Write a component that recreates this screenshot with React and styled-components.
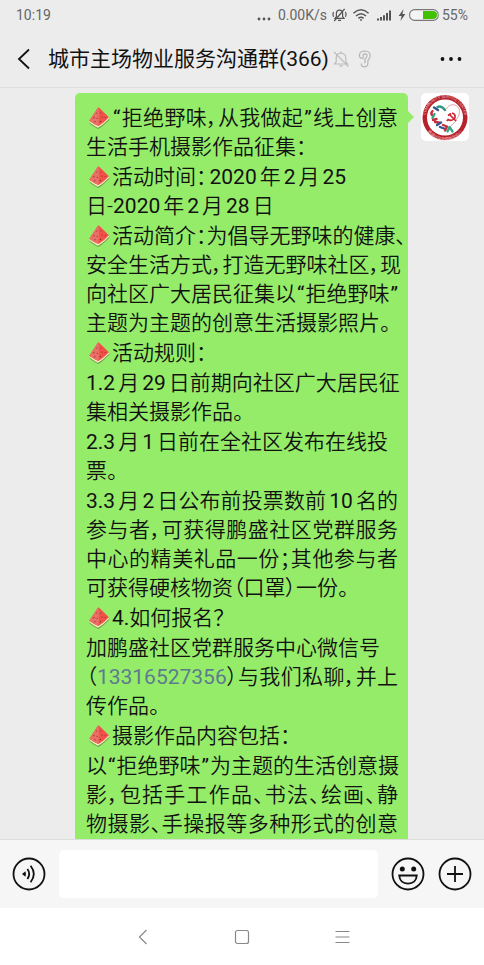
import React, { useState } from "react";
import styled, { createGlobalStyle } from "styled-components";

// every paragraph is a list of lines, "~" stands for the watermelon emoji
const message = [
  ["~“拒绝野味，从我做起”线上创意", "生活手机摄影作品征集："],
  ["~活动时间：2020年2月25", "日-2020年2月28日"],
  [
    "~活动简介：为倡导无野味的健康、",
    "安全生活方式，打造无野味社区，现",
    "向社区广大居民征集以“拒绝野味”",
    "主题为主题的创意生活摄影照片。",
  ],
  ["~活动规则："],
  ["1.2月29日前期向社区广大居民征", "集相关摄影作品。"],
  ["2.3月1日前在全社区发布在线投", "票。"],
  [
    "3.3月2日公布前投票数前10名的",
    "参与者，可获得鹏盛社区党群服务",
    "中心的精美礼品一份；其他参与者",
    "可获得硬核物资（口罩）一份。",
  ],
  ["~4.如何报名？"],
  [
    "加鹏盛社区党群服务中心微信号",
    "（13316527356）与我们私聊，并上",
    "传作品。",
  ],
  ["~摄影作品内容包括："],
  [
    "以“拒绝野味”为主题的生活创意摄",
    "影，包括手工作品、书法、绘画、静",
    "物摄影、手操报等多种形式的创意",
  ],
];

const fullLines = /(创意|健康、|，现|味”|民征|名的|服务|与者|并上|意摄|、静)$/;

const Melon = () => (
  <MelonIcon viewBox="0 0 24 24" role="img" aria-label="西瓜">
    <path d="M0.800 16.500 Q1.500 18.500 11 24 Q13 24 23.400 14 V12 L11 20Z" fill="#6f9f4c" />
    <path d="M0.800 15.500 Q1.500 17.500 10.500 22.600 Q12.500 23 23.400 12.600 L21 10.500 L11 18Z" fill="#f4efba" />
    <path d="M10.800 0.800 Q11.600 0.200 12.500 1 L22.800 11.200 Q18 17 11.400 20.600 Q6 18.500 1.400 15Z" fill="#f4504a" />
    <path d="M10.800 0.800 L1.400 15 Q5.500 18.500 11.400 20.600 Q12.500 10 11.600 0.600Z" fill="#ea6f66" />
    <g fill="#8a2a2a">
      <circle cx="9.600" cy="6.500" r="0.600" />
      <circle cx="14" cy="6.600" r="0.600" />
      <circle cx="6.400" cy="11.600" r="0.700" />
      <circle cx="10" cy="12.400" r="0.600" />
      <circle cx="15.400" cy="11" r="0.700" />
      <circle cx="7.600" cy="16" r="0.600" />
      <circle cx="13.600" cy="15.800" r="0.700" />
      <circle cx="18.800" cy="11.600" r="0.600" />
    </g>
  </MelonIcon>
);

const renderLine = (line) =>
  line.split(/(~|“|”|\d{11}|\d[\d.]*)/).map((part, i) => {
    if (part === "~") return <Melon key={i} />;
    if (/^\d{11}$/.test(part))
      return (
        <Phone key={i} href={`tel:${part}`}>
          {part}
        </Phone>
      );
    if (part === "“" || part === "”") return <Quote key={i}>{part}</Quote>;
    // list numbers such as "4." stay tight to the text
    if (/^\d/.test(part))
      return (
        <Num key={i} $tight={part.endsWith(".")}>
          {part}
        </Num>
      );
    return part;
  });

const StatusIcons = () => (
  <StatusRight>
    <svg width="14" height="14" viewBox="0 0 14 14" fill="#555">
      <circle cx="2" cy="11" r="1.400" />
      <circle cx="7" cy="11" r="1.400" />
      <circle cx="12" cy="11" r="1.400" />
    </svg>
    <Speed>0.00K/s</Speed>
    <svg width="15" height="14" viewBox="0 0 15 14" fill="none" stroke="#555" strokeWidth="1.200">
      <path d="M3 10.300 L4.400 8.600 V5.200 Q4.600 2.200 7.500 2.200 Q10.400 2.200 10.600 5.200 V8.600 L12 10.300Z" />
      <path d="M6 12.400 H9 M12.600 1 L2.200 13" />
      <path d="M1.600 4 Q0.400 6.400 1.600 8.800 M13.400 4 Q14.600 6.400 13.400 8.800" />
    </svg>
    <svg width="18" height="14" viewBox="0 0 18 14" fill="none" stroke="#555" strokeWidth="1.500">
      <path d="M1.400 5.200 Q9 -1.600 16.600 5.200" />
      <path d="M4 8 Q9 3.400 14 8" />
      <path d="M6.400 10.400 Q9 8 11.600 10.400" />
      <circle cx="9" cy="12" r="0.900" fill="#555" stroke="none" />
    </svg>
    <svg width="18" height="14" viewBox="0 0 18 14" fill="#555">
      <path d="M2 10.600h2v2H2z M5 9h2v3.600H5z M8 7.200h2v5.400H8z M11 5h2v7.600h-2z M14 2.600h2v10h-2z" />
    </svg>
    <Battery>
      <svg width="8" height="14" viewBox="0 0 8 14" fill="#555">
        <path d="M5.600 1 L0.600 8 H3.600 L2.400 13 L7.400 6 H4.400Z" />
      </svg>
      <svg width="30" height="12" viewBox="0 0 30 12">
        <rect x="0.600" y="0.600" width="28.600" height="10.800" rx="5" fill="#f4f4f4" stroke="#777" strokeWidth="1.100" />
        <path d="M14 2 H24 Q28 2 28 6 Q28 10 24 10 H14Z" fill="#43c100" />
      </svg>
      <span>55%</span>
    </Battery>
  </StatusRight>
);

const GroupAvatar = () => (
  <svg width="48" height="48" viewBox="0 0 48 48" role="img" aria-label="community service center">
    <defs>
      <path id="ringTop" d="M4.500 24.500 A19.500 19.500 0 1 1 43.500 24.500" />
      <path id="ringBottom" d="M2.500 26 A21.500 21.500 0 0 0 45.500 26" />
    </defs>
    <circle cx="24" cy="24.500" r="22.500" fill="#b5222c" />
    <circle cx="24" cy="24.500" r="18" fill="#fff" />
    <g fill="#f0b8ba" fontFamily="Roboto, sans-serif" fontSize="4">
      <text>
        <textPath href="#ringTop" startOffset="50%" textAnchor="middle">
          COMMUNITY SERVICE CENTER
        </textPath>
      </text>
      <text fontFamily="'Noto Sans CJK SC', sans-serif">
        <textPath href="#ringBottom" startOffset="50%" textAnchor="middle">
          鹏盛社区党群服务中心
        </textPath>
      </text>
    </g>
    <path d="M25 16.500 Q28 10.500 34 12 Q40 14.500 38 22 Q35.500 29 29 34" fill="none" stroke="#e59aa1" strokeWidth="0.900" />
    <g fill="none" strokeWidth="2.400" strokeLinecap="round" strokeLinejoin="round">
      <path d="M24 17 Q20 12 16.500 14" stroke="#2f9a84" />
      <path d="M17 17 L13 14.500" stroke="#36538e" />
      <path d="M11.500 18 Q9.500 20 11 22" stroke="#c5303f" />
      <path d="M13.500 21 L11.500 25" stroke="#39a688" />
      <path d="M12 27 L15.500 26 M14 29 L18 29.500" stroke="#c5303f" />
      <path d="M16 32 L20 29.500 M19 34 L23 35.500" stroke="#36538e" />
      <path d="M22 32 L26 33.500 L24 37.500" stroke="#c5303f" />
      <path d="M26.500 38.500 L28.500 34 L31.500 38.500" stroke="#39a688" />
    </g>
    <g fill="none" stroke="#ce2733" strokeWidth="1.700">
      <path d="M31 20 Q35.500 21.500 33.500 25.500 Q30.500 28.500 27 26.500" />
      <path d="M27 22.500 L30 20.500 M28.500 21.500 L35 28 M27.600 26 L25.800 28" />
    </g>
  </svg>
);

const App = () => {
  const [text, setText] = useState("");

  return (
    <Screen>
      <GlobalStyle />
      <StatusBar>
        <span>10:19</span>
        <StatusIcons />
      </StatusBar>

      <Header>
        <IconButton aria-label="返回">
          <svg width="16" height="22" viewBox="0 0 16 22" fill="none" stroke="#111" strokeWidth="1.800">
            <path d="M13 1.500 L3 11 L13 20.500" />
          </svg>
        </IconButton>
        <Title>城市主场物业服务沟通群(366)</Title>
        <HeaderIcons>
          <svg width="16" height="18" viewBox="0 0 16 18" fill="none" stroke="#bdbdbd" strokeWidth="1.200">
            <path d="M1.500 14 L3.200 12 V7.500 Q3.500 3.500 8 3 Q12.500 3.500 12.800 7.500 V12 L14.500 14Z" />
            <path d="M6.500 15.200 Q8 17.400 9.500 15.200 M8 3 V1.200 M1 2 L15.400 16.500" />
          </svg>
          <svg width="14" height="18" viewBox="0 0 14 18" fill="none" stroke="#b5b5b5" strokeWidth="1.200">
            <path d="M3.800 8.400 Q1 7.600 1.400 4.800 Q2.200 1 6.800 1 Q12.400 1.200 12.200 6 Q11.800 8.800 9.800 10.600 Q10.800 16.400 6.800 16.800 Q3 16.800 3.200 13.400" />
            <path d="M4 8.400 Q5.400 8.800 5.200 6.800 Q4.600 4 7 3.900 Q9.400 4 9 6.200 Q8.600 7.800 6.600 9.400 Q8.400 11.600 6.200 13" />
          </svg>
        </HeaderIcons>
        <MoreButton aria-label="更多">
          <svg width="22" height="6" viewBox="0 0 22 6" fill="#111">
            <circle cx="2.500" cy="3" r="1.900" />
            <circle cx="11" cy="3" r="1.900" />
            <circle cx="19.500" cy="3" r="1.900" />
          </svg>
        </MoreButton>
      </Header>

      <Messages>
        <Bubble>
          {message.map((lines, i) => (
            <Paragraph key={i}>
              {lines.map((line) => (
                <Line key={line} $full={fullLines.test(line)}>
                  {renderLine(line)}
                </Line>
              ))}
            </Paragraph>
          ))}
        </Bubble>
        <Avatar>
          <GroupAvatar />
        </Avatar>
      </Messages>

      <InputBar>
        <IconButton aria-label="语音">
          <svg width="34" height="34" viewBox="0 0 34 34" fill="none" stroke="#111" strokeWidth="1.800">
            <circle cx="17" cy="17" r="15.500" />
            <path d="M10 17 L13.400 14.200 Q14.600 17 13.400 19.800Z" fill="#111" stroke="none" />
            <path d="M15.400 12 Q19 17 15.400 22" />
            <path d="M18.600 8.800 Q25 17 18.600 25.200" />
          </svg>
        </IconButton>
        <TextBox
          aria-label="输入消息"
          value={text}
          onChange={(e) => setText(e.target.value)}
        />
        <IconButton aria-label="表情">
          <svg width="34" height="34" viewBox="0 0 34 34" fill="none" stroke="#111" strokeWidth="1.800">
            <circle cx="17" cy="17" r="15.500" />
            <circle cx="11.300" cy="12" r="2.500" fill="#111" stroke="none" />
            <circle cx="22.700" cy="12" r="2.500" fill="#111" stroke="none" />
            <path d="M8.200 18.500 H25.800 Q25 26.500 17 26.700 Q9 26.500 8.200 18.500Z" />
          </svg>
        </IconButton>
        <IconButton aria-label="更多功能">
          <svg width="34" height="34" viewBox="0 0 34 34" fill="none" stroke="#111" strokeWidth="1.800">
            <circle cx="17" cy="17" r="15.500" />
            <path d="M17 9 V25 M9 17 H25" />
          </svg>
        </IconButton>
      </InputBar>

      <NavBar>
        <IconButton aria-label="后退">
          <svg width="16" height="16" viewBox="0 0 16 16" fill="none" stroke="#888" strokeWidth="1.200">
            <path d="M12.500 1 L5.500 8 L12.500 15" />
          </svg>
        </IconButton>
        <IconButton aria-label="主屏幕">
          <svg width="16" height="16" viewBox="0 0 16 16" fill="none" stroke="#888" strokeWidth="1.200">
            <rect x="1.500" y="1.500" width="13" height="13" rx="2" />
          </svg>
        </IconButton>
        <IconButton aria-label="菜单">
          <svg width="16" height="16" viewBox="0 0 16 16" fill="none" stroke="#888" strokeWidth="1.200">
            <path d="M1.500 2.500 H15.500 M1.500 8 H15.500 M1.500 13.500 H15.500" />
          </svg>
        </IconButton>
      </NavBar>
    </Screen>
  );
};

export default App;

const GlobalStyle = createGlobalStyle`
  * {
    box-sizing: border-box;
  }

  body {
    margin: 0;
    background: #ececec;
    font-family: Roboto, "Noto Sans CJK SC", sans-serif;
    color: #111;
  }
`;

const Screen = styled.div`
  display: flex;
  flex-direction: column;
  height: 100vh;
  overflow: hidden;

  svg {
    flex: none;
    display: block;
  }
`;

const StatusBar = styled.div`
  display: flex;
  justify-content: space-between;
  align-items: center;
  height: 30px;
  padding: 0 16px;
  font-size: 14px;
  color: #666;
`;

const StatusRight = styled.div`
  display: flex;
  align-items: center;
  gap: 5px;
`;

const Battery = styled.div`
  display: flex;
  align-items: center;
  gap: 3px;
`;

const Speed = styled.span`
  margin-left: 2px;
`;

const Header = styled.header`
  display: flex;
  align-items: center;
  height: 58px;
  padding: 0 22px 0 16px;
  border-bottom: 1px solid #dfdfdf;
`;

const HeaderIcons = styled.div`
  display: flex;
  gap: 9px;
  margin-left: 4px;
`;

const IconButton = styled.button`
  display: flex;
  flex: none;
  padding: 0;
  border: none;
  background: none;
  cursor: pointer;
`;

const MoreButton = styled(IconButton)`
  margin-left: auto;
`;

const Title = styled.h1`
  margin: 0 0 0 16px;
  padding-bottom: 3px;
  font-size: 21px;
  font-weight: 400;
  white-space: nowrap;
`;

const Messages = styled.main`
  display: flex;
  flex: 1;
  align-items: flex-start;
  gap: 13px;
  min-height: 0;
  padding: 5px 15px 0 75px;
  overflow: hidden;
`;

const Bubble = styled.div`
  position: relative;
  display: flex;
  flex: 1;
  flex-direction: column;
  gap: 1px;
  min-width: 0;
  padding: 11px 10px 10px 11px;
  border-radius: 5px;
  background: #95ec69;
  font-size: 21px;
  font-weight: 350;
  line-height: 29px;
  font-feature-settings: "palt";

  &::after {
    content: "";
    position: absolute;
    top: 18px;
    left: 100%;
    border: 6px solid transparent;
    border-left-color: #95ec69;
    border-right-width: 0;
  }
`;

const Paragraph = styled.p`
  margin: 0;
`;

const Line = styled.span`
  display: block;
  height: 29px;
  white-space: nowrap;
  text-align-last: ${(props) => (props.$full ? "justify" : "left")};
`;

const Num = styled.span`
  margin: 0 ${(props) => (props.$tight ? "0" : "3px")};
  font-weight: 400;

  &:first-child {
    margin-left: 0;
  }
`;

const Quote = styled.span`
  margin: 0 1px;
  font-weight: 400;
`;

const Phone = styled.a`
  color: #5d7b8f;
  font-weight: 400;
  text-decoration: none;
`;

const MelonIcon = styled.svg`
  && {
    display: inline-block;
    width: 22px;
    height: 22px;
    margin: 0 2px;
    vertical-align: -4px;
  }
`;

const Avatar = styled.div`
  flex: none;
  border-radius: 5px;
  background: #fff;
  overflow: hidden;
`;

const InputBar = styled.footer`
  display: flex;
  align-items: center;
  gap: 13px;
  height: 69px;
  padding: 0 12px;
  border-top: 1px solid #dcdcdc;
  background: #f6f6f6;
`;

const TextBox = styled.input`
  flex: 1;
  min-width: 0;
  height: 48px;
  padding: 0 10px;
  border: none;
  border-radius: 5px;
  background: #fff;
  font: inherit;
  font-size: 21px;
  outline: none;
`;

const NavBar = styled.nav`
  display: flex;
  justify-content: center;
  align-items: center;
  gap: 84px;
  height: 57px;
  background: #fff;
`;
